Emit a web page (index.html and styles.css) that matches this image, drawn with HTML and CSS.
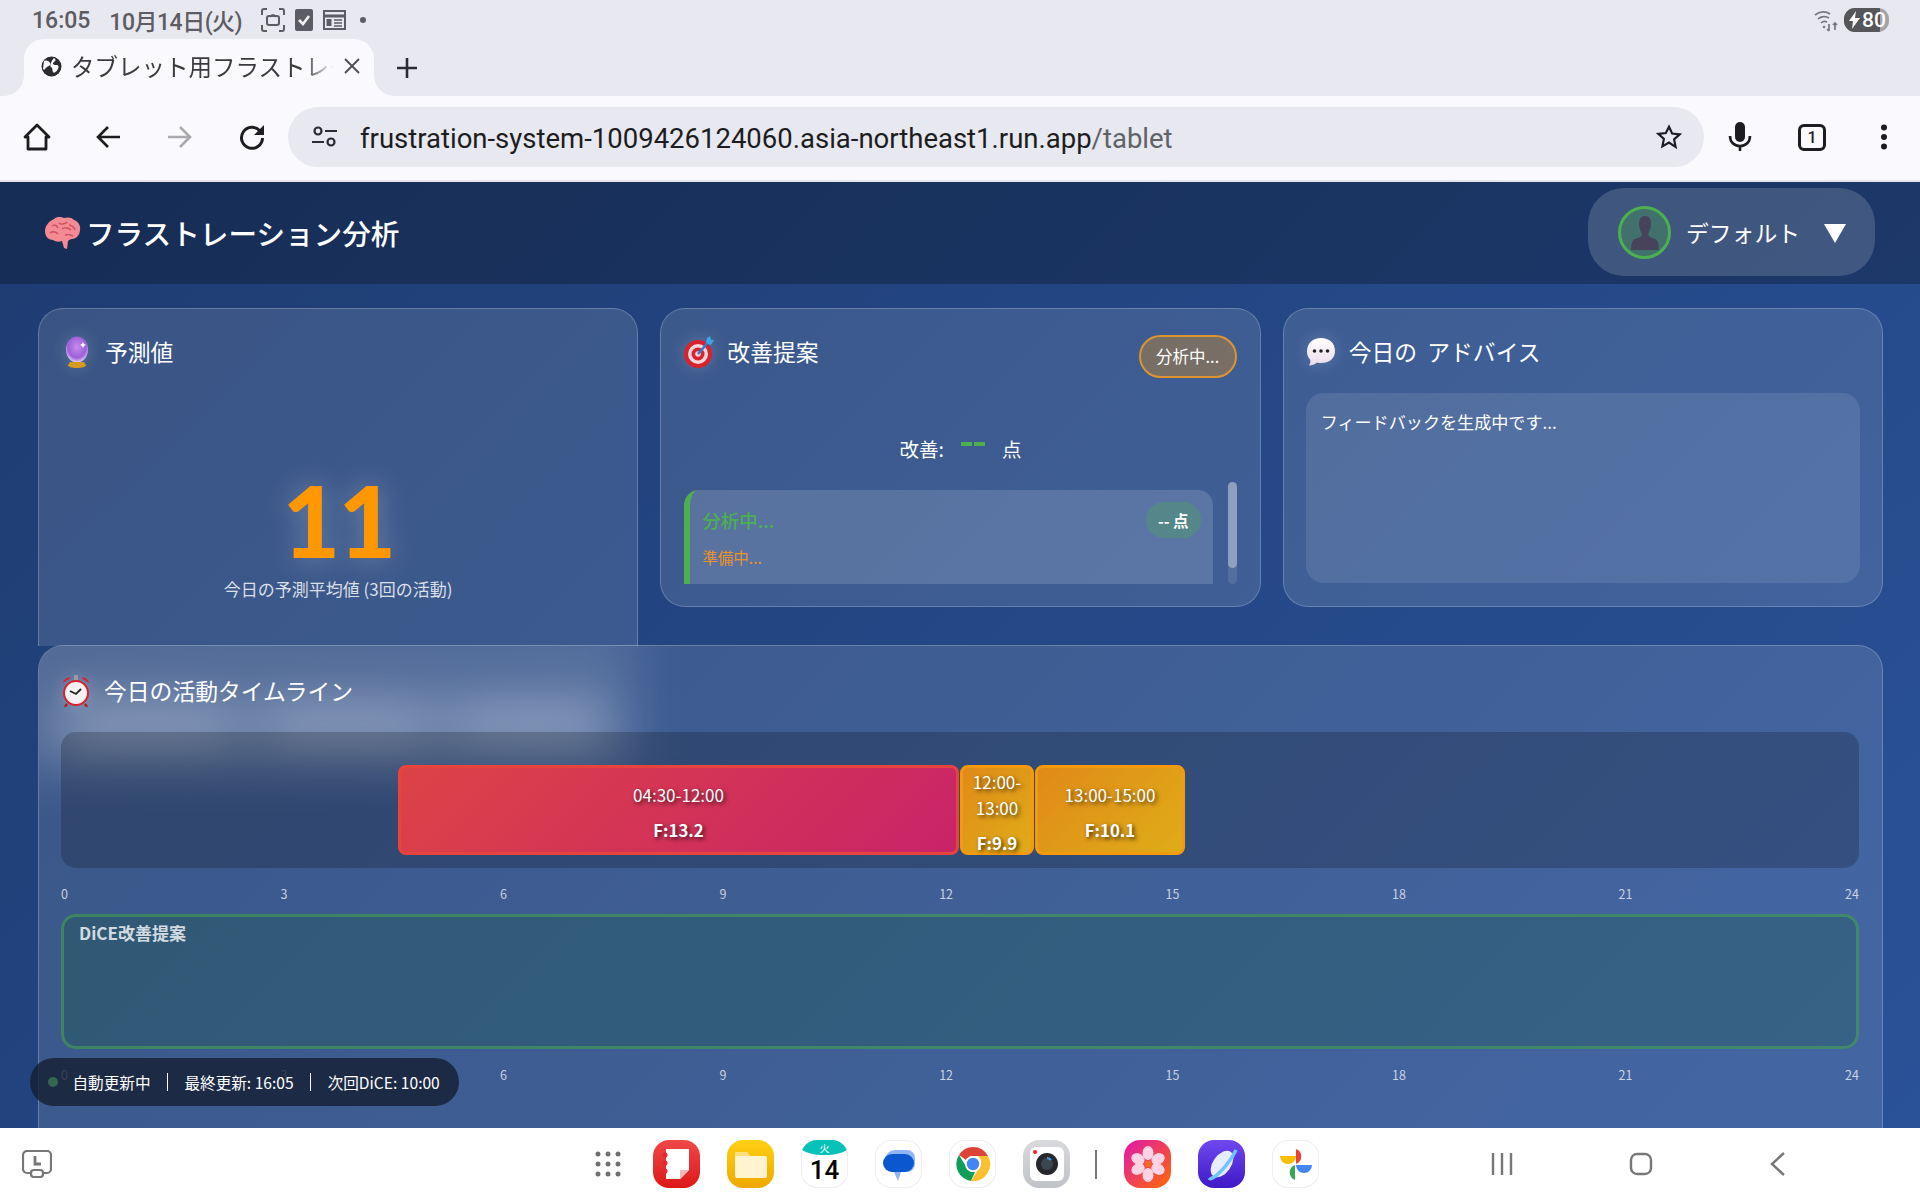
FILE: index.html
```html
<!DOCTYPE html>
<html lang="ja">
<head>
    <meta charset="utf-8">
    <title>タブレット用フラストレーション分析</title>
    <link rel="stylesheet" href="styles.css">
</head>
<body>
    <!-- status bar -->
    <div class="status-bar">
        <span class="clock">16:05</span>
        <span class="date">10月14日(火)</span>
        <svg class="st-icon" width="24" height="24" viewBox="0 0 24 24" fill="none" stroke="#5c5c62" stroke-width="2"><path d="M1 7V3a2 2 0 0 1 2-2h3M18 1h3a2 2 0 0 1 2 2v4M23 17v4a2 2 0 0 1-2 2h-3M6 23H3a2 2 0 0 1-2-2v-4"/><rect x="6" y="8" width="12" height="9" rx="2"/><path d="M9 9l2-2h2l2 2" stroke-width="1.5"/></svg>
        <svg class="st-icon" width="18" height="22" viewBox="0 0 18 22"><rect width="18" height="22" rx="2" fill="#5c5c62"/><path d="M4 11l4 4 6-8" fill="none" stroke="#f0f0f4" stroke-width="2.6"/></svg>
        <svg class="st-icon" width="23" height="20" viewBox="0 0 23 20" fill="none" stroke="#5c5c62" stroke-width="2"><rect x="1" y="1" width="21" height="18"/><path d="M1 6h21" stroke-width="3"/><path d="M11 10h8M11 13h8M11 16h8" stroke-width="1.6"/><rect x="3.500" y="9" width="5" height="7" fill="#5c5c62" stroke="none"/></svg>
        <span class="st-dot"></span>
        <span class="st-space"></span>
        <svg width="24" height="26" viewBox="0 0 24 26" fill="none" stroke="#77777c" stroke-width="1.7"><path d="M1 8c5-4 11-4 15-1M4 12c3-3 8-3 11-1M7 16c2-2 4-2 6-1"/><circle cx="10" cy="20" r="1.300" fill="#77777c" stroke="none"/><path d="M15 17v7m-2-2 2 2M21 23v-7m-2 2 2-2 2 2"/></svg>
        <div class="battery"><span class="battery-fill"></span><span class="battery-text"><svg width="11" height="18" viewBox="0 0 11 18"><path d="M7 0 0 10h4l-1 8 8-11H6z" fill="#fff"/></svg>80</span></div>
    </div>

    <!-- tab strip -->
    <div class="tab-strip">
        <div class="tab">
            <svg width="21" height="21" viewBox="0 0 21 21"><circle cx="10.500" cy="10.500" r="10" fill="#2b2b30"/><path d="M3 5c3-1 5 0 6 2s-1 3-3 4-2 4-4 2zM13 2c2 1 2 3 0 4s-1 3 2 3 3 2 2 4-4 5-5 3 0-4-2-5 1-7 3-9z" fill="#f9f9fe"/></svg>
            <span class="tab-title">タブレット用フラストレーション分析</span>
            <svg class="tab-close" width="16" height="16" viewBox="0 0 16 16" stroke="#4a4a50" stroke-width="1.800"><path d="M1 1l14 14M15 1 1 15"/></svg>
        </div>
        <svg class="tab-plus" width="22" height="22" viewBox="0 0 22 22" stroke="#2b2b30" stroke-width="2.600"><path d="M11 1v20M1 11h20"/></svg>
    </div>

    <!-- toolbar -->
    <div class="toolbar">
        <svg class="tool tool-home" width="28" height="28" viewBox="0 0 28 28" fill="none" stroke="#1d1d21" stroke-width="2.800"><path d="M2 14 14 2l12 12h-3v12H5V14z" stroke-linejoin="round"/></svg>
        <svg class="tool tool-back" width="24" height="24" viewBox="0 0 24 24" fill="none" stroke="#1d1d21" stroke-width="2.600"><path d="M24 12H3M12 2 2 12l10 10"/></svg>
        <svg class="tool tool-forward" width="24" height="24" viewBox="0 0 24 24" fill="none" stroke="#a9a9ae" stroke-width="2.600"><path d="M0 12h21M12 2l10 10-10 10"/></svg>
        <svg class="tool tool-reload" width="26" height="26" viewBox="0 0 26 26" fill="none"><path d="M21 7a10.500 10.500 0 1 0 2.500 7" stroke="#1d1d21" stroke-width="3"/><path d="M25 1v10H15z" fill="#1d1d21"/></svg>
        <div class="omnibox">
            <svg width="25" height="22" viewBox="0 0 25 22" fill="none" stroke="#2b2b30" stroke-width="2.200"><circle cx="6" cy="5" r="3.500"/><path d="M13 5h12M0 16h12"/><circle cx="19" cy="16" r="3.500"/></svg>
            <span class="url">frustration-system-1009426124060.asia-northeast1.run.app<span class="url-path">/tablet</span></span>
            <svg class="star" width="26" height="26" viewBox="0 0 24 24" fill="none" stroke="#1d1d21" stroke-width="2"><path d="m12 2.500 2.900 6.300 6.900.8-5.100 4.700 1.400 6.800L12 17.100l-6.100 3.500 1.400-6.800-5.100-4.700 6.900-.8z"/></svg>
        </div>
        <svg class="tool tool-mic" width="24" height="30" viewBox="0 0 24 30"><rect x="7" y="0" width="10" height="20" rx="5" fill="#1d1d21"/><path d="M2 14c0 6 4 10 10 10s10-4 10-10M12 24v5" fill="none" stroke="#1d1d21" stroke-width="2.600"/></svg>
        <div class="tab-count">1</div>
        <svg class="tool tool-menu" width="8" height="26" viewBox="0 0 8 26" fill="#1d1d21"><circle cx="4" cy="3.500" r="3"/><circle cx="4" cy="13" r="3"/><circle cx="4" cy="22.500" r="3"/></svg>
    </div>

    <!-- page -->
    <div class="app">
        <header class="app-header">
            <h1 class="app-title">
                <svg width="36" height="32" viewBox="0 0 36 32"><path d="M9 2c3-3 8-2 10-1 3-1 8-1 10 2 4 1 7 6 6 10 0 5-4 9-8 9-2 0-3 1-4 2l-1 8-3-1-2-7c-3 1-6 1-9-1-5 0-8-4-8-9 0-5 4-10 9-12z" fill="#f48a93"/><path d="M7 9c3-2 5 0 6 2M5 16c3-2 6-1 8 1M14 6c2 2 6 1 8-1M17 12c3-2 7-1 9 1M24 8c2 0 5 2 6 5M20 18c3-1 6 0 8 1" fill="none" stroke="#c9505f" stroke-width="1.400"/></svg>
                フラストレーション分析
            </h1>
            <div class="profile">
                <div class="avatar">
                    <svg width="28" height="34" viewBox="0 0 28 34"><path d="M14 0c4 0 6 3 6 8 0 4-2 8-3 10 0 3 4 4 7 5 3 1 4 6 4 11H0c0-5 1-10 4-11 3-1 7-2 7-5-1-2-3-6-3-10 0-5 2-8 6-8z" fill="#46435a"/></svg>
                </div>
                <span class="profile-name">デフォルト</span>
                <span class="profile-arrow"></span>
            </div>
        </header>

        <main class="dashboard">
            <div class="top-row">
                <section class="card card-predict">
                    <h2 class="card-title">
                        <svg class="emoji" width="30" height="32" viewBox="0 0 30 32"><defs><radialGradient id="orb" cx=".5" cy=".4" r=".6"><stop offset="0" stop-color="#c88cf0"/><stop offset=".7" stop-color="#9c5fd8"/><stop offset="1" stop-color="#e4d2f8"/></radialGradient></defs><ellipse cx="15" cy="13.500" rx="11" ry="13" fill="url(#orb)"/><path d="M8 26h14l2 3c0 2-4 3-9 3s-9-1-9-3z" fill="#d69a1c"/><path d="M21 6l1 2 2 1-2 1-1 2-1-2-2-1 2-1z" fill="#fff"/></svg>
                        予測値
                    </h2>
                    <div class="predict-value">11</div>
                    <div class="predict-label">今日の予測平均値 (3回の活動)</div>
                </section>

                <section class="card card-improve">
                    <div class="improve-head">
                        <h2 class="card-title">
                            <svg class="emoji" width="30" height="32" viewBox="0 0 30 32"><circle cx="14" cy="18" r="14" fill="#d8232f"/><circle cx="14" cy="18" r="10" fill="#f5d6d8"/><circle cx="14" cy="18" r="6.500" fill="#d8232f"/><circle cx="14" cy="18" r="2.800" fill="#f5d6d8"/><path d="M14 18 27 3" stroke="#2c7fc9" stroke-width="2.600"/><path d="M23 2l3-2 1 4 3 0-3 5-5-2z" fill="#3fa3e6"/></svg>
                            改善提案
                        </h2>
                        <span class="badge">分析中...</span>
                    </div>
                    <div class="improve-score">
                        <span>改善:</span>
                        <span class="score-num"></span>
                        <span>点</span>
                    </div>
                    <div class="improve-list">
                        <div class="improve-items">
                            <div class="improve-item">
                                <div class="item-head">
                                    <span class="item-title">分析中...</span>
                                    <span class="item-points">-- 点</span>
                                </div>
                                <div class="item-sub">準備中...</div>
                            </div>
                        </div>
                        <div class="scroll-track"><div class="scroll-thumb"></div></div>
                    </div>
                </section>

                <section class="card card-advice">
                    <h2 class="card-title">
                        <svg class="emoji" width="30" height="30" viewBox="0 0 30 30"><defs><linearGradient id="bub" x1="0" y1="0" x2="0" y2="1"><stop offset="0" stop-color="#fff"/><stop offset="1" stop-color="#ecdcec"/></linearGradient></defs><path d="M15 1c8 0 14 5 14 13s-6 12-14 12c-2 0-3 0-4-.500-2 2-5 3-8 3 1-2 2-4 1-6-2-2-3-5-3-8C1 6 7 1 15 1z" fill="url(#bub)"/><circle cx="8.500" cy="14" r="1.800" fill="#222"/><circle cx="15" cy="14" r="1.800" fill="#222"/><circle cx="21.500" cy="14" r="1.800" fill="#222"/></svg>
                        今日の&nbsp; アドバイス
                    </h2>
                    <div class="advice-box">フィードバックを生成中です...</div>
                </section>
            </div>

            <section class="card card-timeline">
                <h2 class="card-title">
                    <svg class="emoji" width="30" height="32" viewBox="0 0 30 32"><path d="M2 8a6 6 0 0 1 8-5zM28 8a6 6 0 0 0-8-5z" fill="#d8232f"/><rect x="13" y="0" width="4" height="5" fill="#9a9aa0"/><circle cx="15" cy="18" r="13" fill="#d8232f"/><circle cx="15" cy="18" r="11" fill="#f6f2f4"/><path d="M9 16l6 3 5-5" fill="none" stroke="#222" stroke-width="1.800"/><path d="M6 29l-2 3M24 29l2 3" stroke="#b81c26" stroke-width="2.500"/></svg>
                    今日の活動タイムライン
                </h2>
                <div class="track">
                    <div class="bar bar-red bar-a"><span>04:30-12:00</span><b>F:13.2</b></div>
                    <div class="bar bar-orange bar-b"><span>12:00-13:00</span><b>F:9.9</b></div>
                    <div class="bar bar-orange bar-c"><span>13:00-15:00</span><b>F:10.1</b></div>
                </div>
                <div class="scale"><span>0</span><span>3</span><span>6</span><span>9</span><span>12</span><span>15</span><span>18</span><span>21</span><span>24</span></div>
                <div class="dice-track"><span class="dice-label">DiCE改善提案</span></div>
                <div class="scale"><span>0</span><span>3</span><span>6</span><span>9</span><span>12</span><span>15</span><span>18</span><span>21</span><span>24</span></div>
            </section>
        </main>

        <div class="update-pill">
            <span class="live-dot"></span>
            <span>自動更新中</span>
            <span class="sep"></span>
            <span>最終更新: 16:05</span>
            <span class="sep"></span>
            <span>次回DiCE: 10:00</span>
        </div>
    </div>

    <!-- dock -->
    <div class="dock">
        <svg class="dock-recent" width="30" height="28" viewBox="0 0 30 28" fill="none" stroke="#77777a" stroke-width="2.200"><rect x="1" y="1" width="28" height="22" rx="4"/><path d="M13 6v8h6" stroke-width="2.800"/><rect x="9" y="20" width="12" height="7" rx="3" fill="#fff"/></svg>
        <div class="dock-apps">
            <svg class="apps-grid" width="26" height="26" viewBox="0 0 26 26" fill="#6f6f72"><circle cx="3" cy="3" r="2.500"/><circle cx="13" cy="3" r="2.500"/><circle cx="23" cy="3" r="2.500"/><circle cx="3" cy="13" r="2.500"/><circle cx="13" cy="13" r="2.500"/><circle cx="23" cy="13" r="2.500"/><circle cx="3" cy="23" r="2.500"/><circle cx="13" cy="23" r="2.500"/><circle cx="23" cy="23" r="2.500"/></svg>
            <div class="app-icon ic-notes"><svg width="48" height="48" viewBox="0 0 48 48"><path d="M13 9h23v21l-9 9H13z" fill="#fff"/><path d="M27 39v-9h9z" fill="#f4b7b7"/><circle cx="12" cy="15" r="2.500" fill="#e8262c"/><circle cx="12" cy="23" r="2.500" fill="#e8262c"/><circle cx="12" cy="31" r="2.500" fill="#e8262c"/></svg></div>
            <div class="app-icon ic-files"><svg width="48" height="48" viewBox="0 0 48 48"><path d="M8 14a2 2 0 0 1 2-2h10l3 4h15a2 2 0 0 1 2 2v18a2 2 0 0 1-2 2H10a2 2 0 0 1-2-2z" fill="#fff3d0"/><path d="M8 14a2 2 0 0 1 2-2h10l3 4H8z" fill="#ffdf80"/></svg></div>
            <div class="app-icon ic-cal"><span class="cal-top">火</span><span class="cal-num">14</span></div>
            <div class="app-icon ic-msg"><svg width="48" height="48" viewBox="0 0 48 48"><path d="M10 20a10 10 0 0 1 10-10h12a8 8 0 0 1 8 8v6a8 8 0 0 1-8 8H26l-3 9-4-9a10 10 0 0 1-9-10z" fill="#8fb4f8"/><rect x="8" y="14" width="31" height="18" rx="9" fill="#0b57d0"/></svg></div>
            <div class="app-icon ic-chrome"><svg width="48" height="48" viewBox="0 0 48 48"><path d="M24 7a17 17 0 0 1 15 9H24a8 8 0 0 0-7 4l-7-5A17 17 0 0 1 24 7z" fill="#db4437"/><path d="M10 15l8 13a8 8 0 0 0 8 4l-4 9A17 17 0 0 1 10 15z" fill="#0f9d58"/><path d="M39 16a17 17 0 0 1-17 25l8-13a8 8 0 0 0-1-12z" fill="#fbc02d"/><circle cx="24" cy="24" r="8" fill="#fff"/><circle cx="24" cy="24" r="6.200" fill="#4285f4"/></svg></div>
            <div class="app-icon ic-cam"><svg width="48" height="48" viewBox="0 0 48 48"><rect x="7" y="7" width="34" height="34" rx="6" fill="#fff"/><circle cx="24" cy="24" r="11" fill="#26282c"/><circle cx="24" cy="24" r="6" fill="#3c4650"/><path d="M24 18a6 6 0 0 1 4 2" stroke="#3fa3e6" stroke-width="2" fill="none"/><circle cx="12" cy="12" r="2" fill="#e8262c"/></svg></div>
            <span class="dock-sep"></span>
            <div class="app-icon ic-gallery"><svg width="48" height="48" viewBox="0 0 48 48" fill="#ffd3e4"><ellipse cx="24" cy="13" rx="5.500" ry="7"/><ellipse cx="24" cy="35" rx="5.500" ry="7"/><ellipse cx="14" cy="19" rx="5.500" ry="7" transform="rotate(-60 14 19)"/><ellipse cx="34" cy="19" rx="5.500" ry="7" transform="rotate(60 34 19)"/><ellipse cx="14" cy="29" rx="5.500" ry="7" transform="rotate(60 14 29)"/><ellipse cx="34" cy="29" rx="5.500" ry="7" transform="rotate(-60 34 29)"/><circle cx="24" cy="24" r="3.500" fill="#f46a22"/></svg></div>
            <div class="app-icon ic-browser"><svg width="48" height="48" viewBox="0 0 48 48" fill="none"><ellipse cx="24" cy="24" rx="9" ry="15" transform="rotate(35 24 24)" fill="#e8ecff"/><path d="M11 38C14 42 30 26 38 10" stroke="#6ec6ff" stroke-width="3.500"/></svg></div>
            <div class="app-icon ic-photos"><svg width="48" height="48" viewBox="0 0 48 48"><path d="M24 23V8a8 8 0 0 1 0 15z" fill="#ea4335" transform="translate(0 1)"/><path d="M24 24H8a8 8 0 0 0 16 0z" fill="#fbbc04" transform="rotate(0 24 24) translate(0 -8)"/><path d="M23 25v15a8 8 0 0 1 0-15z" fill="#34a853"/><path d="M24 25h16a8 8 0 0 1-16 0z" fill="#4285f4"/></svg></div>
        </div>
        <div class="nav-keys">
            <svg class="nav-lines" width="24" height="24" viewBox="0 0 24 24" stroke="#77777a" stroke-width="2.400"><path d="M3 1v22M12 1v22M21 1v22"/></svg>
            <svg class="nav-home" width="24" height="24" viewBox="0 0 24 24" fill="none" stroke="#77777a" stroke-width="2.400"><rect x="2" y="2" width="20" height="20" rx="6"/></svg>
            <svg class="nav-back" width="16" height="24" viewBox="0 0 16 24" fill="none" stroke="#77777a" stroke-width="2.400"><path d="M14 1 2 12l12 11"/></svg>
        </div>
    </div>
</body>
</html>
```

FILE: styles.css
```css
* {
    box-sizing: border-box;
}

html,
body {
    margin: 0;
    height: 1200px;
    overflow: hidden;
}

body {
    display: flex;
    flex-direction: column;
    font-family: "Noto Sans CJK JP", "Noto Sans", sans-serif;
    background: #fff;
}

svg {
    display: block;
    flex: none;
}

/* status bar */
.status-bar {
    height: 39px;
    background: #e8e8f0;
    display: flex;
    align-items: center;
    padding: 1px 31px 0 32px;
    color: #5c5c62;
    font-family: Roboto, "Noto Sans CJK JP", sans-serif;
    font-size: 23px;
    font-weight: 500;
}

.date {
    margin-left: 19px;
    margin-right: 19px;
    letter-spacing: -0.5px;
}

.st-icon {
    margin-right: 10px;
}

.st-dot {
    width: 6px;
    height: 6px;
    margin-left: 4px;
    border-radius: 50%;
    background: #5c5c62;
}

.st-space {
    flex: 1;
}

.battery {
    position: relative;
    width: 45px;
    height: 24px;
    margin-left: 6px;
    border-radius: 11px;
    background: #a3a3a8;
    overflow: hidden;
}

.battery-fill {
    display: block;
    width: 36px;
    height: 24px;
    background: #55555a;
}

.battery-text {
    position: absolute;
    left: 5px;
    top: 0;
    display: flex;
    align-items: center;
    gap: 2px;
    height: 24px;
    color: #fff;
    font-size: 21px;
}

/* tabs */
.tab-strip {
    height: 57px;
    background: #e8e8f0;
    display: flex;
    align-items: center;
    padding-left: 24px;
}

.tab {
    position: relative;
    width: 350px;
    height: 57px;
    background: #f9f9fe;
    border-radius: 20px 20px 0 0;
    display: flex;
    align-items: center;
    padding: 0 14px 3px 17px;
}

.tab::before,
.tab::after {
    content: "";
    position: absolute;
    bottom: 0;
    width: 20px;
    height: 20px;
}

.tab::before {
    left: -20px;
    background: radial-gradient(circle at 0 0, #e8e8f0 19.500px, #f9f9fe 20px);
}

.tab::after {
    right: -20px;
    background: radial-gradient(circle at 100% 0, #e8e8f0 19.500px, #f9f9fe 20px);
}

.tab-title {
    width: 264px;
    margin-left: 9px;
    overflow: hidden;
    white-space: nowrap;
    font-size: 23.500px;
    color: #3a3a40;
    -webkit-mask-image: linear-gradient(to right, #000 88%, transparent);
    mask-image: linear-gradient(to right, #000 88%, transparent);
}

.tab-close {
    margin-left: 10px;
}

.tab-plus {
    margin-left: 22px;
}

/* toolbar */
.toolbar {
    height: 86px;
    background: #f9f9fe;
    border-bottom: 2px solid #e4e4ea;
    display: flex;
    align-items: center;
    padding: 0 0 2px 23px;
}

.tool-back {
    margin-left: 45px;
}

.tool-forward {
    margin-left: 48px;
}

.tool-reload {
    margin-left: 47px;
}

.omnibox {
    width: 1416px;
    height: 60px;
    margin-left: 23px;
    padding: 0 22px 0 24px;
    border-radius: 30px;
    background: #e8e8f0;
    display: flex;
    align-items: center;
}

.url {
    flex: 1;
    margin-left: 23px;
    padding-top: 2px;
    font-family: Roboto, sans-serif;
    font-size: 27.500px;
    color: #1d1d21;
    white-space: nowrap;
}

.url-path {
    color: #5f6368;
}

.tool-mic {
    margin-left: 24px;
}

.tab-count {
    width: 28px;
    height: 27px;
    margin-left: 46px;
    border: 3px solid #1d1d21;
    border-radius: 6px;
    font-family: Roboto, sans-serif;
    font-size: 16px;
    font-weight: 500;
    line-height: 21px;
    text-align: center;
    color: #1d1d21;
}

.tool-menu {
    margin-left: 54px;
}

/* page */
.app {
    position: relative;
    flex: 1;
    min-height: 0;
    overflow: hidden;
    background: linear-gradient(135deg, #1e3c72, #2a5298);
    color: #fff;
}

.app-header {
    height: 102px;
    padding: 0 45px 0 45px;
    background: rgba(0, 0, 0, 0.25);
    display: flex;
    align-items: center;
    justify-content: space-between;
}

.app-title {
    margin: 0;
    display: flex;
    align-items: center;
    gap: 5px;
    font-size: 28.600px;
    font-weight: 500;
    line-height: 40px;
}

.profile {
    width: 287px;
    height: 88px;
    margin-top: -2px;
    padding-left: 30px;
    border-radius: 36px;
    background: rgba(255, 255, 255, 0.16);
    display: flex;
    align-items: center;
}

.avatar {
    width: 53px;
    height: 53px;
    border: 3px solid #4caf50;
    border-radius: 50%;
    background: #41706d;
    display: flex;
    align-items: flex-end;
    justify-content: center;
    overflow: hidden;
    padding-bottom: 6px;
}

.profile-name {
    margin-left: 15px;
    font-size: 22.800px;
}

.profile-arrow {
    margin: 3px 0 0 24px;
    border-left: 11.500px solid transparent;
    border-right: 11.500px solid transparent;
    border-top: 19px solid #fff;
}

.dashboard {
    padding: 24px 37px 0 38px;
}

.top-row {
    height: 299px;
    display: grid;
    grid-template-columns: repeat(3, 1fr);
    gap: 22px;
    align-items: start;
}

.card {
    border: 1px solid rgba(255, 255, 255, 0.22);
    border-radius: 25px;
    background: rgba(255, 255, 255, 0.12);
    padding: 22px 23px;
}

.card-title {
    margin: 0;
    display: flex;
    align-items: center;
    gap: 13px;
    font-size: 22.800px;
    font-weight: 400;
    line-height: 42px;
}

.emoji {
    filter: drop-shadow(0 0 8px rgba(255, 255, 255, 0.18));
}

/* runs on behind the timeline card */
.card-predict {
    height: 338px;
    border-bottom: 0;
    border-radius: 25px 25px 0 0;
    text-align: center;
}

.predict-value {
    margin-top: 93px;
    font-family: Lato, sans-serif;
    font-size: 100px;
    font-weight: 900;
    letter-spacing: -2px;
    line-height: 106px;
    color: #ff9800;
    text-shadow: 0 0 30px rgba(255, 255, 255, 0.3);
}

.predict-label {
    margin-top: 4px;
    font-size: 17px;
    line-height: 26px;
    color: rgba(255, 255, 255, 0.82);
}

.card-improve,
.card-advice {
    height: 299px;
}

.card-advice {
    padding-left: 22px;
    padding-right: 22px;
}

.improve-head {
    display: flex;
    justify-content: space-between;
    align-items: flex-start;
}

.badge {
    width: 98px;
    height: 43px;
    margin-top: 4px;
    border: 2px solid #dd942e;
    border-radius: 22px;
    background: rgba(255, 152, 0, 0.3);
    font-size: 16.500px;
    line-height: 39px;
    text-align: center;
}

.improve-score {
    height: 40px;
    margin-top: 50px;
    display: flex;
    align-items: center;
    justify-content: center;
    gap: 17px;
    font-size: 19.500px;
}

.score-num {
    width: 24px;
    height: 4px;
    margin-bottom: 9px;
    background: repeating-linear-gradient(to right, #4caf50 0 11px, transparent 11px 13px);
}

.improve-list {
    height: 102px;
    margin-top: 14px;
    display: flex;
    gap: 15px;
}

.improve-items {
    flex: 1;
    padding-top: 8px;
    overflow: hidden;
}

.improve-item {
    height: 120px;
    padding: 9px 12px 0 12px;
    border-left: 6px solid #4caf50;
    border-radius: 15px;
    background: rgba(255, 255, 255, 0.15);
}

.item-head {
    display: flex;
    justify-content: space-between;
    align-items: flex-start;
}

.item-title {
    margin-top: 6px;
    font-size: 18.500px;
    font-weight: 500;
    line-height: 30px;
    color: #4caf50;
}

.item-points {
    width: 55px;
    height: 36px;
    margin-top: 3px;
    border-radius: 18px;
    background: rgba(76, 175, 80, 0.3);
    font-size: 15.500px;
    font-weight: 700;
    line-height: 36px;
    text-align: center;
}

.item-sub {
    margin-top: 7px;
    font-size: 15.500px;
    line-height: 24px;
    color: #e8922a;
}

.scroll-track {
    width: 9px;
    border-radius: 5px;
    background: rgba(255, 255, 255, 0.1);
}

.scroll-thumb {
    height: 86px;
    border-radius: 5px;
    background: rgba(255, 255, 255, 0.35);
}

.advice-box {
    height: 190px;
    margin-top: 20px;
    padding: 14px 15px;
    border-radius: 18px;
    background: rgba(255, 255, 255, 0.1);
    font-size: 17.100px;
    line-height: 30px;
}

/* timeline */
.card-timeline {
    position: relative;
    isolation: isolate;
    overflow: hidden;
    height: 520px;
    margin-top: 38px;
    padding: 24px 23px 0 22px;
}

/* frosted glow of the forecast card seen through this one */
.card-timeline::before {
    content: "";
    position: absolute;
    z-index: -1;
    left: -50px;
    top: -50px;
    width: 650px;
    height: 178px;
    background:
        linear-gradient(rgba(255, 255, 255, 0.36), rgba(255, 255, 255, 0.36)) 70px 106px / 180px 46px no-repeat,
        linear-gradient(rgba(255, 255, 255, 0.36), rgba(255, 255, 255, 0.36)) 270px 106px / 175px 46px no-repeat,
        linear-gradient(rgba(255, 255, 255, 0.36), rgba(255, 255, 255, 0.36)) 460px 106px / 160px 46px no-repeat,
        rgba(255, 255, 255, 0.12);
    filter: blur(26px);
}

.card-timeline .card-title {
    margin-bottom: 20px;
}

.track {
    height: 136px;
    padding: 33px 0 0 337px;
    border-radius: 15px;
    background: rgba(0, 0, 0, 0.2);
    display: flex;
}

.bar {
    height: 90px;
    border-width: 3px;
    border-style: solid;
    border-radius: 8px;
    margin-right: 1px;
    display: flex;
    flex-direction: column;
    align-items: center;
    justify-content: center;
    text-align: center;
    font-size: 17px;
    line-height: 26px;
    text-shadow: 2px 2px 4px rgba(0, 0, 0, 0.7);
}

.bar b {
    margin-top: 13px;
    font-size: 16.800px;
    line-height: 18px;
}

.bar-red {
    border-color: #e8443e;
    background: linear-gradient(135deg, #dc4346, #c92368);
}

.bar-orange {
    border-color: #f59a0c;
    background: linear-gradient(135deg, #e08a18, #dfac18);
}

.bar-a {
    width: 561px;
}

.bar-b {
    width: 74px;
}

.bar-c {
    width: 150px;
}

.scale {
    height: 46px;
    padding-top: 5px;
    display: flex;
    justify-content: space-between;
    align-items: center;
    font-size: 12.500px;
    color: rgba(255, 255, 255, 0.72);
}

.dice-track {
    height: 135px;
    padding: 4px 15px;
    border: 3px solid rgba(76, 175, 80, 0.5);
    border-radius: 15px;
    background: rgba(20, 90, 60, 0.28);
}

.dice-label {
    font-size: 17px;
    font-weight: 700;
    line-height: 24px;
    color: rgba(255, 255, 255, 0.8);
}

/* overlay pill */
.update-pill {
    position: absolute;
    left: 30px;
    bottom: 22px;
    z-index: 5;
    width: 429px;
    height: 48px;
    padding-left: 18px;
    border-radius: 24px;
    background: rgba(20, 30, 50, 0.8);
    display: flex;
    align-items: center;
    gap: 16.500px;
    font-size: 15.600px;
    white-space: nowrap;
}

.live-dot {
    width: 10px;
    height: 10px;
    margin-right: -2px;
    border-radius: 50%;
    background: #356652;
}

.sep {
    width: 1px;
    height: 18px;
    background: #fff;
}

/* dock */
.dock {
    position: relative;
    height: 72px;
    background: #fff;
    display: flex;
    align-items: center;
    padding-left: 22px;
}

.dock-apps {
    display: flex;
    align-items: center;
    margin-left: 543px;
}

.apps-grid {
    margin-right: 32px;
}

.app-icon {
    width: 47px;
    height: 48px;
    margin-right: 27px;
    border-radius: 16px;
    overflow: hidden;
    flex: none;
}

.ic-notes {
    background: linear-gradient(#f0484a, #dc1818);
}

.ic-files {
    background: linear-gradient(#ffd012, #efa800);
}

.ic-cal {
    background: #fff;
    box-shadow: inset 0 0 0 1px #eee;
    display: flex;
    flex-direction: column;
    align-items: center;
    color: #000;
}

.cal-top {
    width: 100%;
    height: 15px;
    background: #06c2b8;
    border-radius: 0 0 50% 50%;
    font-size: 10px;
    line-height: 15px;
    text-align: center;
    color: #fff;
}

.cal-num {
    font-family: Roboto, sans-serif;
    font-size: 26px;
    font-weight: 500;
    line-height: 30px;
}

.ic-msg,
.ic-chrome,
.ic-photos {
    background: #fff;
    box-shadow: inset 0 0 0 1px #eee;
}

.ic-cam {
    background: linear-gradient(#d8dadc, #bfc2c6);
}

.dock-sep {
    width: 2px;
    height: 29px;
    margin: 0 27px 0 -2px;
    background: #77777a;
}

.ic-gallery {
    background: linear-gradient(135deg, #e016b0, #ff6a00);
}

.ic-browser {
    background: linear-gradient(#7048ee, #3f18c8);
}

.nav-keys {
    display: flex;
    align-items: center;
    margin-left: 144px;
}

.nav-home {
    margin-left: 115px;
}

.nav-back {
    margin-left: 117px;
}
```
